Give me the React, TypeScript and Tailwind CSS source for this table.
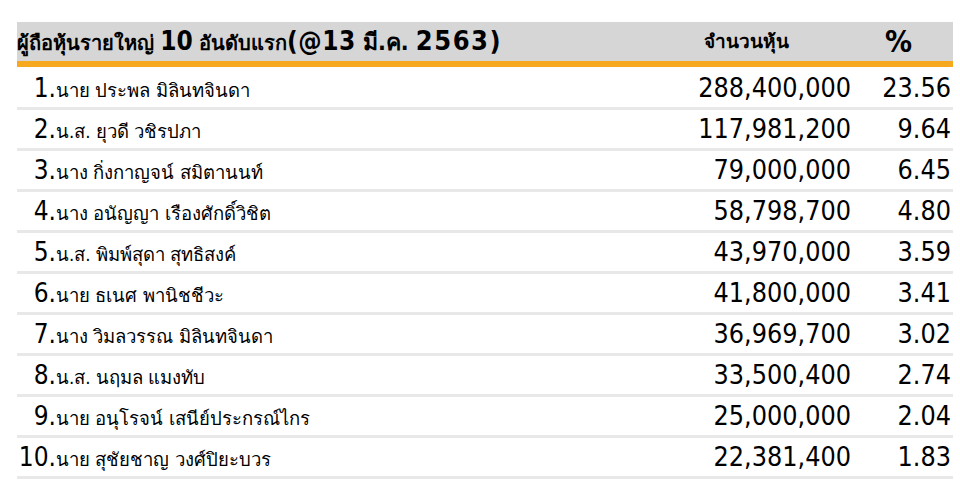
import React from 'react';

const rows = [
  { no: 1, name: 'นาย ประพล มิลินทจินดา', shares: '288,400,000', pct: '23.56' },
  { no: 2, name: 'น.ส. ยุวดี วชิรปภา', shares: '117,981,200', pct: '9.64' },
  { no: 3, name: 'นาง กิ่งกาญจน์ สมิตานนท์', shares: '79,000,000', pct: '6.45' },
  { no: 4, name: 'นาง อนัญญา เรืองศักดิ์วิชิต', shares: '58,798,700', pct: '4.80' },
  { no: 5, name: 'น.ส. พิมพ์สุดา สุทธิสงค์', shares: '43,970,000', pct: '3.59' },
  { no: 6, name: 'นาย ธเนศ พานิชชีวะ', shares: '41,800,000', pct: '3.41' },
  { no: 7, name: 'นาง วิมลวรรณ มิลินทจินดา', shares: '36,969,700', pct: '3.02' },
  { no: 8, name: 'น.ส. นฤมล แมงทับ', shares: '33,500,400', pct: '2.74' },
  { no: 9, name: 'นาย อนุโรจน์ เสนีย์ประกรณ์ไกร', shares: '25,000,000', pct: '2.04' },
  { no: 10, name: 'นาย สุชัยชาญ วงศ์ปิยะบวร', shares: '22,381,400', pct: '1.83' },
];

const font = { fontFamily: '"DejaVu Sans Condensed", "DejaVu Sans", "Noto Sans", sans-serif' };

export default function App() {
  return (
    <div className="w-[960px] h-[493px] bg-white overflow-hidden text-black" style={font}>
      <div className="pt-[22px] pl-[17px] pr-[7px]">
        {/* Header */}
        <div className="flex items-center h-[39px] bg-[#d6d6d6] font-bold">
          <div className="flex-1 whitespace-nowrap">
            <span className="text-[20px]">ผู้ถือหุ้นรายใหญ่ </span>
            <span className="text-[26px]">10</span>
            <span className="text-[20px]"> อันดับแรก</span>
            <span className="text-[26px] tracking-[0.5px]">(@13</span>
            <span className="text-[23px]"> มี.ค. </span>
            <span className="text-[27px] tracking-[1.5px]">2563)</span>
          </div>
          <div className="w-[170px] pl-[21px] text-[19px] font-semibold">จำนวนหุ้น</div>
          <div className="w-[100px] pl-[32px] text-[30px]">%</div>
        </div>
        <div className="h-[6px] bg-[#f6a81e]" />

        {/* Rows */}
        <div className="pt-[2px]">
          {rows.map((r) => (
            <div key={r.no} className="flex items-center h-[41px] pr-[2px] border-b-[3px] border-[#e8e8e8]">
              <div className="flex-1 flex items-baseline whitespace-nowrap">
                <span className="w-[39px] text-right text-[26px]">{r.no}.</span>
                <span className="text-[18.5px]">{r.name}</span>
              </div>
              <div className="w-[170px] text-right text-[26.7px]">{r.shares}</div>
              <div className="w-[100px] text-right text-[26.7px]">{r.pct}</div>
            </div>
          ))}
        </div>
      </div>
    </div>
  );
}
